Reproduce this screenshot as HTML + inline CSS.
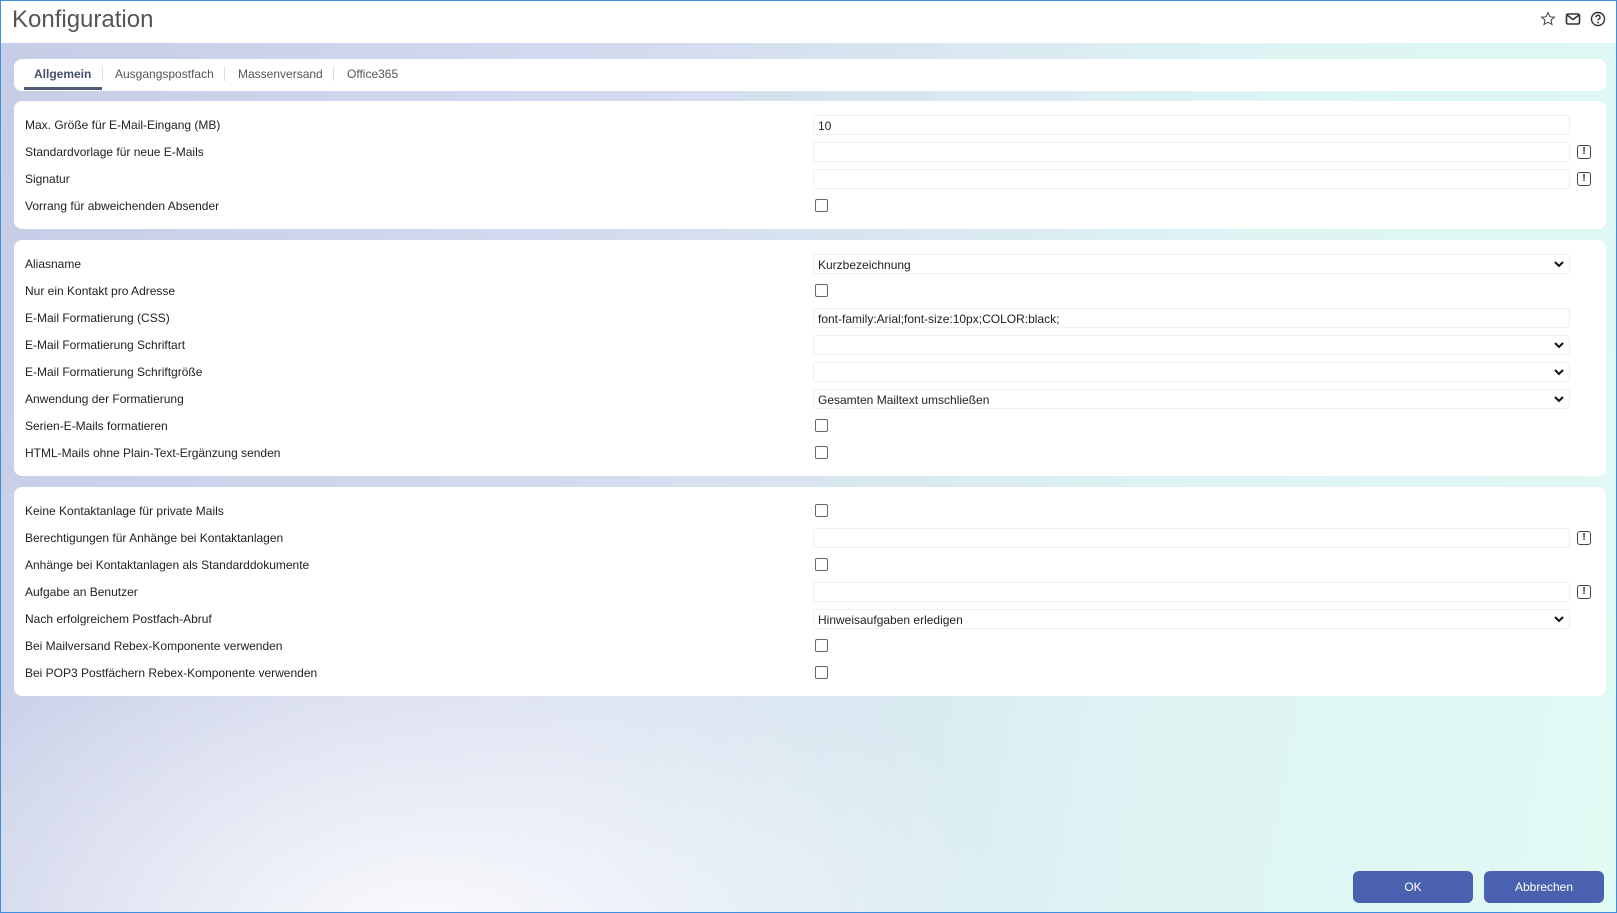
<!DOCTYPE html>
<html><head><meta charset="utf-8"><style>
*{box-sizing:border-box;margin:0;padding:0}
html,body{width:1617px;height:913px;overflow:hidden}
body{font-family:"Liberation Sans",Arial,sans-serif;font-size:12px;color:#222;position:relative;
background:#fff;border:1px solid #3d8fe0}
.bg{position:absolute;left:0;top:42px;right:0;bottom:0;
background:radial-gradient(ellipse 800px 480px at 420px 900px,rgba(255,255,255,.9),rgba(255,255,255,0) 75%),
linear-gradient(100deg,#c6cde6 0%,#d4daee 35%,#ddf3f3 70%,#e0faf4 100%)}
.title{position:absolute;left:11px;top:5px;font-size:24px;color:#555}
.icons{position:absolute;right:10px;top:10px;display:flex;gap:9px}
.tabs{position:absolute;left:13px;top:58px;width:1592px;height:32px;background:#fff;border-radius:8px}
.tab{position:absolute;top:8px;font-size:12px;color:#555}
.sep{position:absolute;top:8px;width:1px;height:14px;background:#ddd}
.panel{position:absolute;left:13px;width:1592px;background:#fff;border-radius:8px}
.row{position:absolute;left:0;width:100%;height:20px}
.row .l{position:absolute;left:11px;top:3px}
.inp{position:absolute;left:799px;width:757px;height:20px;border:1px solid #eee;border-radius:3px;padding:3px 4px}
.cb{position:absolute;left:801px;top:3px;width:13px;height:13px;border:1px solid #666;border-radius:2px}
.arr{position:absolute;right:4px;top:2px}
.ex{position:absolute;left:1563px;top:3px;width:14px;height:14px;border:1.5px solid #444;border-radius:3px;font-size:10px;font-weight:bold;text-align:center;line-height:11px}
.btn{position:absolute;top:870px;width:120px;height:32px;background:#4a61b0;border-radius:6px;color:#fff;font-size:12px;text-align:center;line-height:32px}
</style></head><body>
<div class="bg"></div>
<div class="title">Konfiguration</div>
<div class="icons">
<svg width="16" height="16" viewBox="0 0 16 16"><path d="M8 1.5l1.9 4.2 4.5.4-3.4 3 1 4.4L8 11.2l-4 2.3 1-4.4-3.4-3 4.5-.4z" fill="none" stroke="#444" stroke-width="1"/></svg>
<svg width="16" height="16" viewBox="0 0 16 16"><rect x="1.5" y="3" width="13" height="10" rx="1.5" fill="none" stroke="#333" stroke-width="1.6"/><path d="M2 4l6 4.5L14 4" fill="none" stroke="#333" stroke-width="1.6"/></svg>
<svg width="16" height="16" viewBox="0 0 16 16"><circle cx="8" cy="8" r="6.5" fill="none" stroke="#333" stroke-width="1.4"/><path d="M6 6.3a2 2 0 1 1 2.8 1.8c-.6.3-.8.7-.8 1.4" fill="none" stroke="#333" stroke-width="1.4"/><circle cx="8" cy="11.6" r=".9" fill="#333"/></svg>
</div>
<div class="tabs">
<div class="tab" style="left:20px;font-weight:bold;color:#44506a">Allgemein</div>
<div style="position:absolute;left:10px;top:28px;width:78px;height:3px;background:#4a5a78"></div>
<div class="sep" style="left:88px"></div>
<div class="tab" style="left:101px">Ausgangspostfach</div>
<div class="sep" style="left:210px"></div>
<div class="tab" style="left:224px">Massenversand</div>
<div class="sep" style="left:319px"></div>
<div class="tab" style="left:333px">Office365</div>
</div>

<div class="panel" style="top:100px;height:128px">
<div class="row" style="top:14px"><span class="l">Max. Größe für E-Mail-Eingang (MB)</span><div class="inp">10</div></div>
<div class="row" style="top:41px"><span class="l">Standardvorlage für neue E-Mails</span><div class="inp"></div><div class="ex">!</div></div>
<div class="row" style="top:68px"><span class="l">Signatur</span><div class="inp"></div><div class="ex">!</div></div>
<div class="row" style="top:95px"><span class="l">Vorrang für abweichenden Absender</span><div class="cb"></div></div>
</div>

<div class="panel" style="top:239px;height:236px">
<div class="row" style="top:14px"><span class="l">Aliasname</span><div class="inp">Kurzbezeichnung<svg class="arr" width="12" height="14" viewBox="0 0 12 14"><path d="M2 5l4 4 4-4" fill="none" stroke="#111" stroke-width="2"/></svg></div></div>
<div class="row" style="top:41px"><span class="l">Nur ein Kontakt pro Adresse</span><div class="cb"></div></div>
<div class="row" style="top:68px"><span class="l">E-Mail Formatierung (CSS)</span><div class="inp">font-family:Arial;font-size:10px;COLOR:black;</div></div>
<div class="row" style="top:95px"><span class="l">E-Mail Formatierung Schriftart</span><div class="inp"><svg class="arr" width="12" height="14" viewBox="0 0 12 14"><path d="M2 5l4 4 4-4" fill="none" stroke="#111" stroke-width="2"/></svg></div></div>
<div class="row" style="top:122px"><span class="l">E-Mail Formatierung Schriftgröße</span><div class="inp"><svg class="arr" width="12" height="14" viewBox="0 0 12 14"><path d="M2 5l4 4 4-4" fill="none" stroke="#111" stroke-width="2"/></svg></div></div>
<div class="row" style="top:149px"><span class="l">Anwendung der Formatierung</span><div class="inp">Gesamten Mailtext umschließen<svg class="arr" width="12" height="14" viewBox="0 0 12 14"><path d="M2 5l4 4 4-4" fill="none" stroke="#111" stroke-width="2"/></svg></div></div>
<div class="row" style="top:176px"><span class="l">Serien-E-Mails formatieren</span><div class="cb"></div></div>
<div class="row" style="top:203px"><span class="l">HTML-Mails ohne Plain-Text-Ergänzung senden</span><div class="cb"></div></div>
</div>

<div class="panel" style="top:486px;height:209px">
<div class="row" style="top:14px"><span class="l">Keine Kontaktanlage für private Mails</span><div class="cb"></div></div>
<div class="row" style="top:41px"><span class="l">Berechtigungen für Anhänge bei Kontaktanlagen</span><div class="inp"></div><div class="ex">!</div></div>
<div class="row" style="top:68px"><span class="l">Anhänge bei Kontaktanlagen als Standarddokumente</span><div class="cb"></div></div>
<div class="row" style="top:95px"><span class="l">Aufgabe an Benutzer</span><div class="inp"></div><div class="ex">!</div></div>
<div class="row" style="top:122px"><span class="l">Nach erfolgreichem Postfach-Abruf</span><div class="inp">Hinweisaufgaben erledigen<svg class="arr" width="12" height="14" viewBox="0 0 12 14"><path d="M2 5l4 4 4-4" fill="none" stroke="#111" stroke-width="2"/></svg></div></div>
<div class="row" style="top:149px"><span class="l">Bei Mailversand Rebex-Komponente verwenden</span><div class="cb"></div></div>
<div class="row" style="top:176px"><span class="l">Bei POP3 Postfächern Rebex-Komponente verwenden</span><div class="cb"></div></div>
</div>

<div class="btn" style="left:1352px">OK</div>
<div class="btn" style="left:1483px">Abbrechen</div>
</body></html>
